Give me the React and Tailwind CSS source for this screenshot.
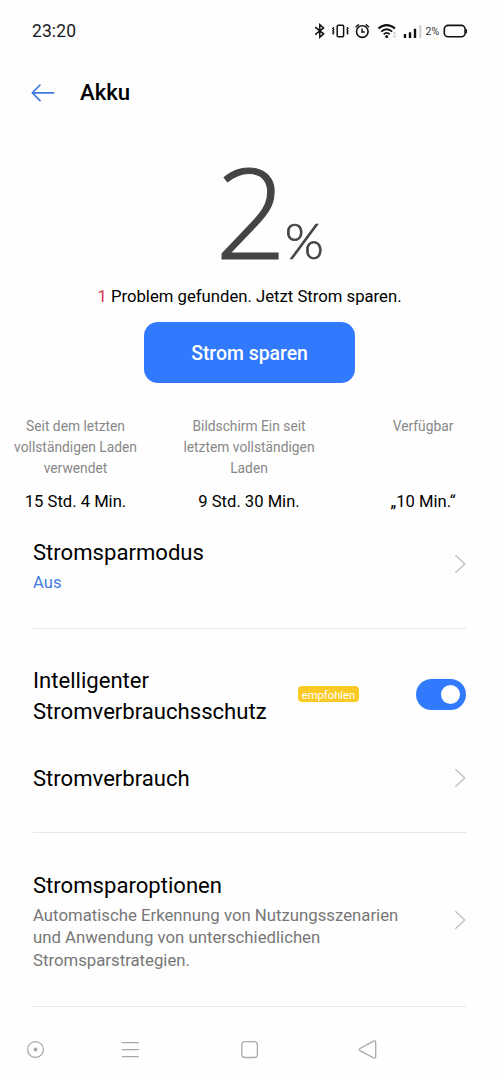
import React, { useState } from 'react';

const stats = [
  { label: 'Seit dem letzten vollständigen Laden verwendet', value: '15 Std. 4 Min.' },
  { label: 'Bildschirm Ein seit letztem vollständigen Laden', value: '9 Std. 30 Min.' },
  { label: 'Verfügbar', value: '„10 Min.“' },
];

const Chevron = () => (
  <svg className="h-5 w-3 shrink-0" viewBox="0 0 12 20" fill="none" stroke="#c4c4c4" strokeWidth="1.5" strokeLinecap="round" strokeLinejoin="round">
    <path d="M1.7 1.5L10.8 10L1.7 18.5" />
  </svg>
);

const StatusBar = () => (
  <header className="flex h-[62px] items-center justify-between pl-8 pr-[31px]">
    <span className="pt-px text-[17.5px] tracking-[0.1px] text-[#1a1a1a]">23:20</span>
    <svg className="h-5 w-[154px]" viewBox="0 0 154 20" fill="none" stroke="#111" strokeWidth="1.5">
      <path d="M1.2 6.2L9.6 12.9L5.8 16.3V3.6L9.6 6.9L1.2 13.6" strokeWidth="1.5" />
      {/* vibrate */}
      <rect x="23.2" y="4.2" width="6.4" height="11.5" rx="1" />
      <path d="M19.8 6.2l-1 1.2 1 1.2-1 1.2 1 1.2-1 1.2 1 1.2M33 6.2l1 1.2-1 1.2 1 1.2-1 1.2 1 1.2-1 1.2" strokeWidth="1.3" />
      {/* alarm */}
      <circle cx="48.3" cy="10.6" r="5.8" strokeWidth="1.6" />
      <path d="M48 7.5V11h2.8M41.6 6.2l3.2-2.8M55 6.2l-3.2-2.8" strokeWidth="1.4" />
      {/* wifi */}
      <path d="M64.4 7.6Q72.7 0.6 81 7.6" strokeWidth="2" />
      <path d="M67.2 10.6Q72.7 5.8 78.2 10.6" strokeWidth="1.9" />
      <path d="M69.7 13.2Q72.7 10.6 75.7 13.2" strokeWidth="1.8" />
      <circle cx="72.7" cy="15.5" r="1.5" fill="#111" stroke="none" />
      <path d="M80.5 11v2.2M80.5 14.3v2.2" stroke="#ccc" strokeWidth="2" />
      {/* signal */}
      <path d="M91 13v4M96 11.2V17M101 7.8V17" strokeWidth="2.4" />
      <path d="M106.3 4v13" stroke="#ccc" strokeWidth="2" />
      <text x="111.5" y="13.5" fill="#333" stroke="none" fontSize="10.5" fontFamily="Roboto, sans-serif">2%</text>
      <rect x="130.3" y="4.4" width="20.8" height="11.4" rx="3.8" strokeWidth="1.6" />
      <path d="M152.3 8.2v4" strokeWidth="1.4" />
    </svg>
  </header>
);

const Divider = () => <hr className="mx-[33px] h-px shrink-0 border-0 bg-[#e6e6e6]" />;

const NavBar = () => (
  <nav className="flex h-[73px] items-center pl-[26px] pt-[12px]">
    <svg className="h-5 w-[351px]" viewBox="0 0 351 20" fill="none" stroke="#aaa" strokeWidth="1.3" strokeLinecap="round" strokeLinejoin="round">
      <circle cx="9.5" cy="9.5" r="7.9" />
      <circle cx="9.5" cy="9.5" r="1.9" fill="#aaa" stroke="none" />
      <path d="M96.3 2.7h16.2M96.3 9.7h16.2M96.3 16.7h16.2" />
      <rect x="215.8" y="1.7" width="15.6" height="15.8" rx="3" />
      <path d="M334 8.5L347.5 1.1Q349.7 .4 349.7 2.5V16.7Q349.5 18.7 347.5 17.8L334 10.7Q332.5 9.5 334 8.5Z" />
    </svg>
  </nav>
);

export default function App() {
  const [protection, setProtection] = useState(true);

  return (
    <div className="flex h-[1080px] w-[499px] flex-col overflow-hidden bg-[#fefefe] font-['Roboto',sans-serif] text-black">
      <StatusBar />
      <div className="flex h-[62px] items-center gap-[25px] pl-[31px]">
        <svg className="h-5 w-6" viewBox="0 0 24 20" fill="none" stroke="#3d7be0" strokeWidth="1.7" strokeLinecap="round" strokeLinejoin="round">
          <path d="M9 2L1.3 9.8L9 17.6M1.3 9.8H22.6" />
        </svg>
        <h1 className="text-[22.2px] font-medium">Akku</h1>
      </div>

      <section className="flex h-[281px] flex-col items-center">
        <div className="flex h-[155px] items-baseline pl-[40px] font-light text-[#444]">
          <span className="font-['Open_Sans',sans-serif] text-[125px] leading-[173px] [-webkit-text-stroke:1.2px_#444]">2</span>
          <span className="-ml-[2px] font-['Lato',sans-serif] text-[50px] leading-none [-webkit-text-stroke:0.7px_#444]">%</span>
        </div>
        <p className="h-[43px] pt-[6px] text-[16.7px] leading-6">
          <span className="text-[#d8344c]">1</span> Problem gefunden. Jetzt Strom sparen.
        </p>
        <button className="h-[61px] w-[211px] rounded-[14px] bg-[#327afd] pt-[3px] text-[19.4px] font-medium text-white">
          Strom sparen
        </button>
      </section>

      <section className="grid h-[121px] grid-cols-[151px_196px_152px] pt-[10px] text-center">
        {stats.map(({ label, value }) => (
          <div key={label} className="flex flex-col items-center">
            <p className="h-[74px] w-[140px] pt-px text-[13.8px] leading-[21.3px] text-[#888]">{label}</p>
            <p className="pt-px text-[16.6px] leading-6">{value}</p>
          </div>
        ))}
      </section>

      <section className="flex h-[103px] items-center justify-between pb-[25px] pl-[33px] pr-[33px]">
        <div className="pt-[6px]">
          <h2 className="text-[22.1px] leading-[30px]">Stromsparmodus</h2>
          <p className="text-[16.6px] leading-[31px] text-[#447de0]">Aus</p>
        </div>
        <Chevron />
      </section>
      <Divider />

      <section className="flex h-[132px] shrink-0 items-center pb-[2px] pl-[33px] pr-[33px]">
        <h2 className="w-[265px] pt-[3px] text-[22.1px] leading-[30.5px]">Intelligenter Stromverbrauchsschutz</h2>
        <span className="flex h-4 w-[61px] items-center justify-center rounded-[4px] bg-[#fbc924] pt-[2px] text-[11.2px] leading-none text-white">empfohlen</span>
        <button
          role="switch"
          aria-checked={protection}
          onClick={() => setProtection(!protection)}
          className={`ml-auto flex h-[31px] w-[50px] items-center rounded-full px-[6px] ${protection ? 'justify-end bg-[#327afd]' : 'justify-start bg-gray-300'}`}
        >
          <span className="h-[19px] w-[19px] rounded-full bg-white" />
        </button>
      </section>
      <section className="flex h-[71px] items-center justify-between pb-[38px] pl-[33px] pr-[33px]">
        <h2 className="text-[22.1px] leading-[30px]">Stromverbrauch</h2>
        <Chevron />
      </section>
      <Divider />

      <section className="flex h-[173px] items-center justify-between pl-[33px] pr-[33px]">
        <div className="pt-[2px]">
          <h2 className="text-[22.1px] leading-[30px]">Stromsparoptionen</h2>
          <p className="mt-1 w-[380px] text-[16.75px] leading-[22.5px] text-[#777]">
            Automatische Erkennung von Nutzungsszenarien und Anwendung von unterschiedlichen Stromsparstrategien.
          </p>
        </div>
        <Chevron />
      </section>
      <Divider />
      <NavBar />
    </div>
  );
}
